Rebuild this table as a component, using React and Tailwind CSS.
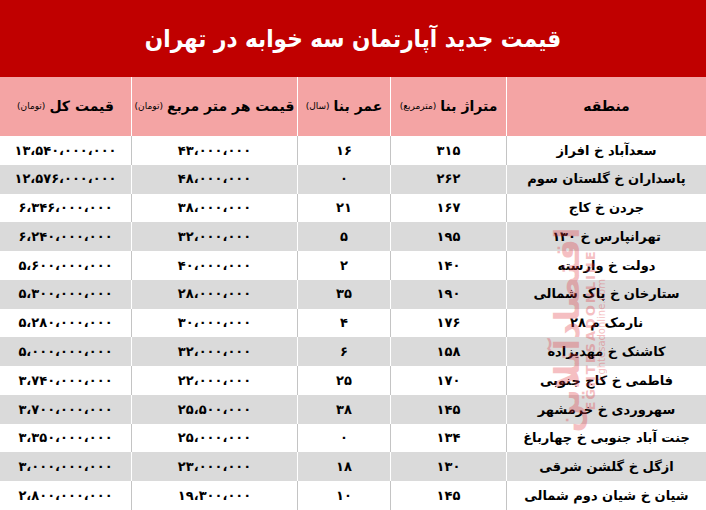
import React from "react";

const rows = [
  ["سعدآباد خ افراز", "۳۱۵", "۱۶", "۴۳،۰۰۰،۰۰۰", "۱۳،۵۴۰،۰۰۰،۰۰۰"],
  ["پاسداران خ گلستان سوم", "۲۶۲", "۰", "۴۸،۰۰۰،۰۰۰", "۱۲،۵۷۶،۰۰۰،۰۰۰"],
  ["جردن خ کاج", "۱۶۷", "۲۱", "۳۸،۰۰۰،۰۰۰", "۶،۳۴۶،۰۰۰،۰۰۰"],
  ["تهرانپارس خ ۱۳۰", "۱۹۵", "۵", "۳۲،۰۰۰،۰۰۰", "۶،۲۴۰،۰۰۰،۰۰۰"],
  ["دولت خ وارسته", "۱۴۰", "۲", "۴۰،۰۰۰،۰۰۰", "۵،۶۰۰،۰۰۰،۰۰۰"],
  ["ستارخان خ پاک شمالی", "۱۹۰", "۳۵", "۲۸،۰۰۰،۰۰۰", "۵،۳۰۰،۰۰۰،۰۰۰"],
  ["نارمک م ۲۸", "۱۷۶", "۴", "۳۰،۰۰۰،۰۰۰", "۵،۲۸۰،۰۰۰،۰۰۰"],
  ["کاشنک خ مهدیزاده", "۱۵۸", "۶", "۳۲،۰۰۰،۰۰۰", "۵،۰۰۰،۰۰۰،۰۰۰"],
  ["فاطمی خ کاج جنوبی", "۱۷۰", "۲۵", "۲۲،۰۰۰،۰۰۰", "۳،۷۴۰،۰۰۰،۰۰۰"],
  ["سهروردی خ خرمشهر", "۱۴۵", "۳۸", "۲۵،۵۰۰،۰۰۰", "۳،۷۰۰،۰۰۰،۰۰۰"],
  ["جنت آباد جنوبی خ چهارباغ", "۱۳۴", "۰", "۲۵،۰۰۰،۰۰۰", "۳،۳۵۰،۰۰۰،۰۰۰"],
  ["ازگل خ گلشن شرقی", "۱۳۰", "۱۸", "۲۳،۰۰۰،۰۰۰", "۳،۰۰۰،۰۰۰،۰۰۰"],
  ["شیان خ شیان دوم شمالی", "۱۴۵", "۱۰", "۱۹،۳۰۰،۰۰۰", "۲،۸۰۰،۰۰۰،۰۰۰"],
];

const cols = "grid grid-cols-[199px_116px_93px_166px_132px]";

export default function App() {
  return (
    <div
      dir="rtl"
      className="relative w-[706px] h-[510px] flex flex-col bg-white overflow-hidden text-black"
      style={{ fontFamily: '"DejaVu Sans", "Noto Sans", sans-serif' }}
    >
      <div className="h-[77px] shrink-0 bg-[#c00000] flex items-center justify-center">
        <h1
          className="text-white text-[24px] font-bold leading-none"
          style={{ fontFamily: '"DejaVu Sans Condensed", "DejaVu Sans", sans-serif' }}
        >
          قیمت جدید آپارتمان سه خوابه در تهران
        </h1>
      </div>
      <div className={`${cols} h-[59px] shrink-0 bg-[#f4a4a4]`}>
        <div className="flex items-center justify-center font-bold text-[14px]">منطقه</div>
        <div className="flex items-center justify-center gap-1 border-r border-white font-bold text-[14px]">
          <span>متراژ بنا</span>
          <span className="font-normal text-[9px]">(مترمربع)</span>
        </div>
        <div className="flex items-center justify-center gap-1 border-r border-white font-bold text-[14px]">
          <span>عمر بنا</span>
          <span className="font-normal text-[9px]">(سال)</span>
        </div>
        <div className="flex items-center justify-center gap-1 border-r border-white font-bold text-[14px]">
          <span>قیمت هر متر مربع</span>
          <span className="font-normal text-[9px]">(تومان)</span>
        </div>
        <div className="flex items-center justify-center gap-1 border-r border-white font-bold text-[14px]">
          <span>قیمت کل</span>
          <span className="font-normal text-[9px]">(تومان)</span>
        </div>
      </div>
      <div className="flex-1 flex flex-col">
        {rows.map((r, i) => {
          const gray = i % 2 === 1;
          const line = gray ? "border-white" : "border-[#c4c4c4]";
          return (
            <div
              key={i}
              className={`${cols} flex-1 ${gray ? "bg-[#dadada]" : "bg-white"} text-[13px] font-bold`}
            >
              <div className="flex items-center justify-center whitespace-nowrap">{r[0]}</div>
              <div className={`flex items-center justify-center border-r ${line}`}>{r[1]}</div>
              <div className={`flex items-center justify-center border-r ${line}`}>{r[2]}</div>
              <div className={`flex items-center justify-center border-r ${line}`}>{r[3]}</div>
              <div className={`flex items-center justify-center border-r ${line}`}>{r[4]}</div>
            </div>
          );
        })}
      </div>
      <div className="pointer-events-none absolute left-[578px] top-[330px] -translate-x-1/2 -translate-y-1/2 -rotate-90 flex flex-col items-center opacity-30 text-[#e0303a] leading-none">
        <span className="text-[34px] font-bold">اقتصادآنلاین</span>
        <span dir="ltr" className="text-[13px] font-bold tracking-[2px]">EGHTESADONLINE</span>
        <span dir="ltr" className="text-[10px]">Eghtesadonline.com</span>
      </div>
    </div>
  );
}
